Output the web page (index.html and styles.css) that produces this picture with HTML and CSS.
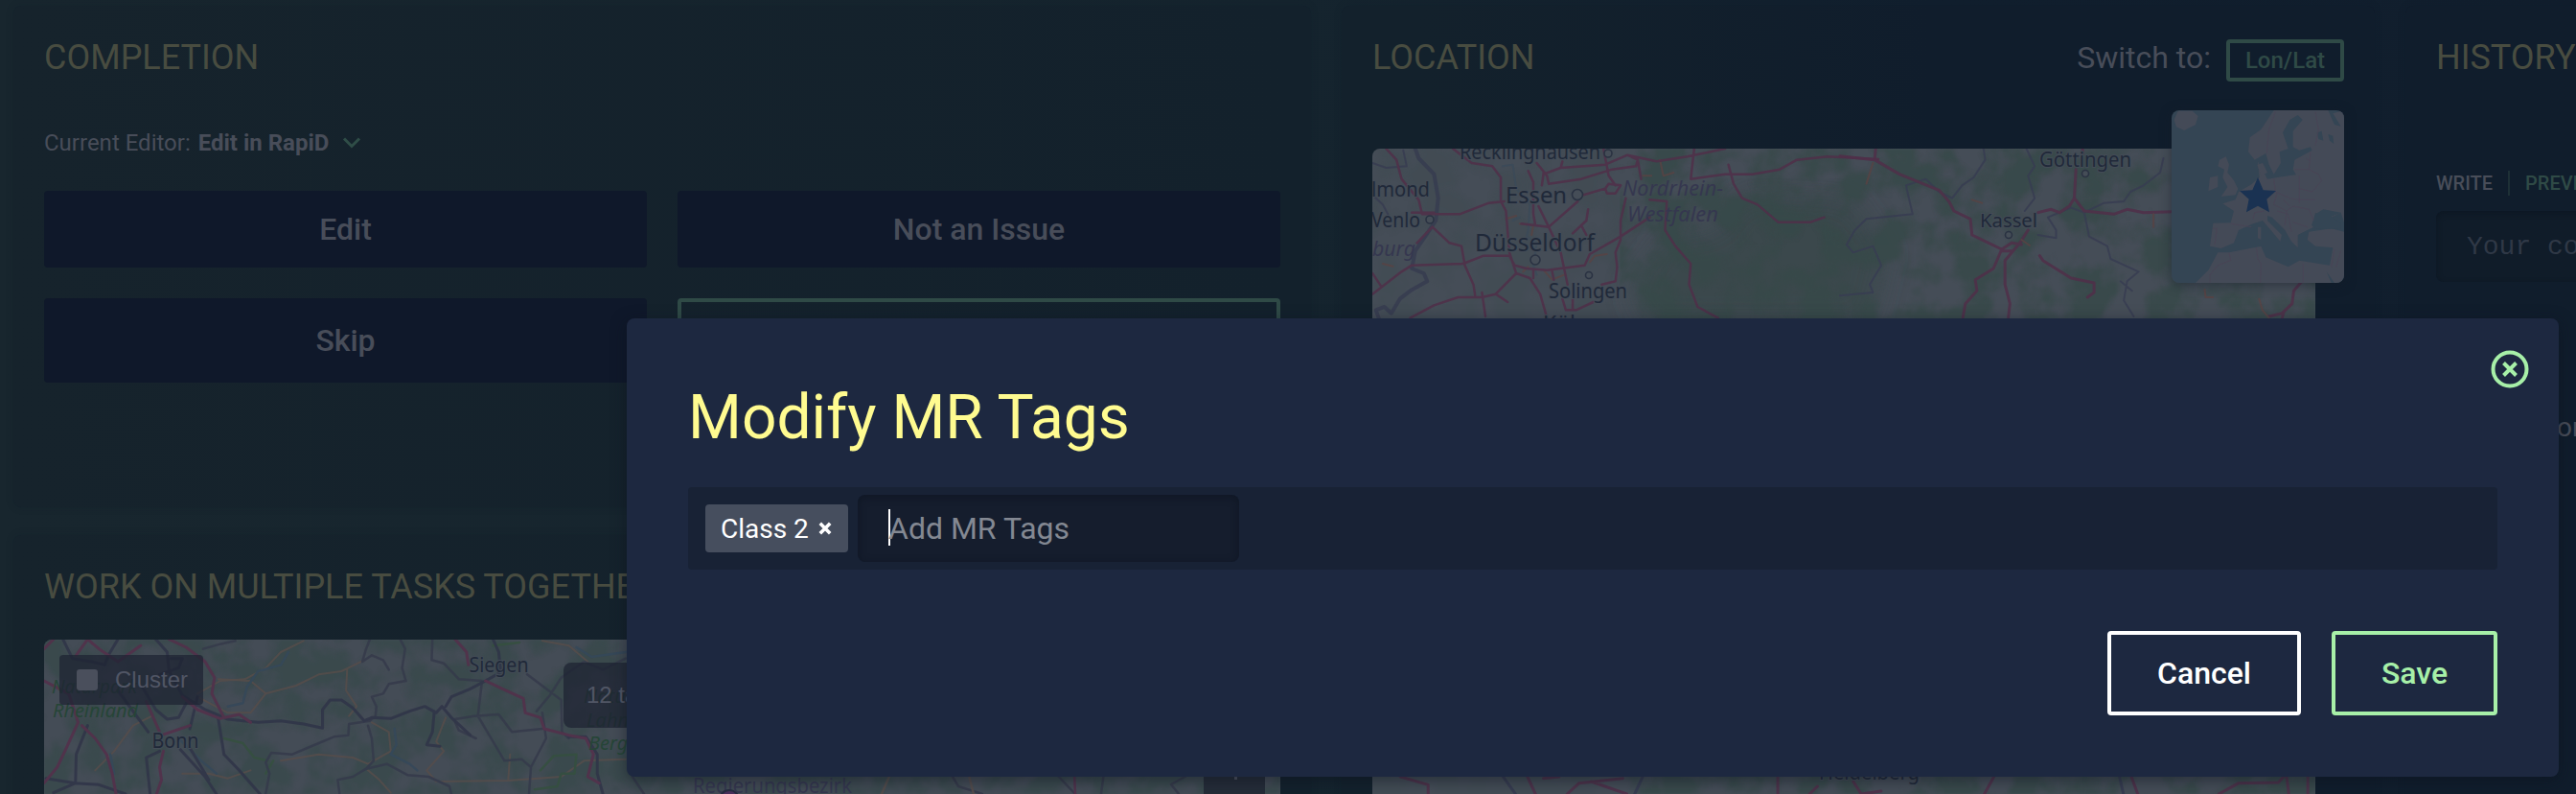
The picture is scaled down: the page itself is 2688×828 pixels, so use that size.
FILE: index.html
```html
<!DOCTYPE html>
<html lang="en">
<head>
<meta charset="utf-8">
<title>Modify MR Tags</title>
<link rel="stylesheet" href="styles.css">
</head>
<body>
<div class="page">
  <div class="column column-left">
    <section class="card card-completion">
      <h2 class="card-title">Completion</h2>
      <div class="editor-row">Current Editor: <strong>Edit in RapiD</strong>
        <svg class="chevron" width="20" height="12" viewBox="0 0 20 12"><path d="M2 1.5 10 9.5 18 1.5" fill="none" stroke="#2f4d47" stroke-width="3"/></svg>
      </div>
      <div class="actions">
        <div class="action">Edit</div>
        <div class="action">Not an Issue</div>
        <div class="action">Skip</div>
        <div class="action action-outline"></div>
      </div>
    </section>
    <section class="card card-tasks">
      <h2 class="card-title">Work on multiple tasks together</h2>
      <div class="task-map">
        <svg class="map-art" width="1290" height="161" viewBox="46 667 1290 161">
          <defs>
            <filter id="woods" x="0" y="0" width="100%" height="100%" color-interpolation-filters="sRGB">
              <feTurbulence type="fractalNoise" baseFrequency="0.028" numOctaves="5" seed="8"/>
              <feColorMatrix values="0 0 0 0 .215  0 0 0 0 .285  0 0 0 0 .29  0 0 0 4 -1.5"/>
              <feGaussianBlur stdDeviation="1"/>
            </filter>
          </defs>
          <rect x="46" y="667" width="1290" height="161" fill="#444c56"/>
          <rect x="46" y="667" width="1290" height="161" filter="url(#woods)" opacity=".75"/>
          <g class="lines" transform="translate(40 660) scale(.3954 .33333)">
            <g stroke="#564d4b" stroke-width="2">
              <path d="M700 25 L640 60 600 110 545 145 480 150 420 190 M475 145 L560 150 600 190 680 165 740 130 800 120 860 85 M600 190 L560 250 500 250 420 200 M815 115 L812 180 840 230 820 260 M150 430 L200 370 250 290 300 260 M380 440 L450 440 500 455 560 430 M640 400 L740 380 830 390 870 410 930 370 925 310 880 280 M870 430 L900 460 930 500 M1075 265 L1050 340 1070 370 1025 430 1050 465 1240 462 1245 380 M1240 462 L1380 450 1440 400 1550 395 M1450 90 L1400 40 1330 25"/>
            </g>
            <g stroke="#35485a" stroke-width="2.5"><path d="M660 60 L640 100 580 120 550 170 540 220 500 230 M940 300 L945 350 930 380 980 410 1000 430 M200 440 L190 380 M1420 45 L1460 75 1550 60 M370 330 L430 400 470 440"/></g>
            <g stroke="#35503f" stroke-width="2.5"><path d="M490 330 L540 345 570 390 605 400 M1325 430 L1360 385 1420 380 1415 440 1380 440 1370 480 1310 490 M620 400 L600 440 M1200 40 L1270 30"/></g>
            <g stroke="#353a4b" stroke-width="2.5">
              <path d="M880 70 L855 90 865 50 875 20 M880 70 L910 85 925 115 M955 20 L968 50 960 110 970 150 925 160 910 190 880 200 892 230 890 260 875 275 820 285 818 320 780 325 740 345 670 380 615 375 600 405 610 440 600 504 M1040 20 L1038 85 1070 95 1110 145 1170 150 M1290 130 L1380 210 1382 310 1400 330 M1550 80 L1490 115 1440 90 1380 140 1350 195 1315 245 M1170 160 L1160 260 1190 320 1230 400 1275 395 1300 420 1340 330 1330 250 M1100 270 L1150 260 1215 255 1250 310 1330 300 M1300 420 L1295 504 M865 425 L885 400 880 330 870 290 M865 425 L830 450 790 460 795 504 M865 425 L920 410 975 445 1030 450 1085 480 1090 504 M1100 280 L1110 305 1155 330 M435 50 L480 35 520 25"/>
            </g>
            <g stroke="#303448" stroke-width="3">
              <path d="M65 20 L90 80 140 90 175 100 185 70 210 20 M310 20 L340 60 345 120 380 195 440 240 500 270 580 280 640 275 700 285 750 298 750 240 770 210 800 210 830 235 860 275 880 265 930 268 980 245 1020 230 1050 250 1065 230 1090 265 1140 320 M1075 230 L1090 200 1140 175 1180 150 1225 120 M1045 245 L1040 310 1025 350 1060 355 M475 270 L490 380 530 430 585 504 M375 365 L440 450 470 504 M400 360 L450 460 M210 180 L290 310 M275 170 L310 240 340 270 370 265 390 220 M320 130 L370 110 380 80 350 80 M420 200 L400 300 M130 290 L100 380 98 470 160 475 230 504 M98 470 L20 455 M98 470 L40 500 M320 370 L285 390 295 504 M1400 325 L1445 325 1475 380 1475 440 1490 504 M1200 20 L1215 60 1220 120"/>
            </g>
            <g stroke="#542f4b" stroke-width="3">
              <path d="M15 50 L40 20 M100 70 L130 20 160 50 210 90 270 40 M345 20 L390 45 440 90 465 140 458 190 490 265 M15 150 L80 190 105 280 70 370 50 420 15 470 M115 290 L150 330 180 380 195 440 205 504 M285 215 L320 310 M325 320 L400 290 M330 370 L320 420 325 460 312 504 M380 200 L420 240 480 268 530 255 560 280 M1100 20 L1130 60 1135 100 M1180 150 L1225 175 1280 205 1285 250 1325 265 1335 300 1400 320 1445 330 1465 380 1450 450 1480 470"/>
            </g>
          </g>
          <g class="lines" stroke="#35394a" stroke-width="2.5">
            <path d="M994 810 L1000 820 1025 828 M1100 805 L1122 828 M1152 805 L1149 828 M1240 808 L1222 818 1230 828 M660 810 L672 828"/>
            <path d="M1121 805 L1122 828" stroke="#542f4b"/><path d="M930 805 L920 828 M1010 805 L1016 828" stroke="#564d4b"/>
          </g>
          <g class="place" font-size="22">
            <text x="489.500" y="701" textLength="62" lengthAdjust="spacingAndGlyphs">Siegen</text>
            <text x="158.500" y="780" textLength="49" lengthAdjust="spacingAndGlyphs">Bonn</text>
          </g>
          <g class="park" font-size="20">
            <text x="54" y="723" textLength="89" lengthAdjust="spacingAndGlyphs">Naturpark</text><text x="55" y="748" textLength="89" lengthAdjust="spacingAndGlyphs">Rheinland</text>
            <text x="609" y="733">Naturpark</text><text x="612" y="758">Lahn-</text><text x="614" y="782">Bergland</text>
          </g>
          <text class="region-upright" x="723" y="827" font-size="21" textLength="166" lengthAdjust="spacingAndGlyphs">Regierungsbezirk</text>
          <circle cx="761" cy="834" r="10" fill="#4a2f5c" stroke="#272c40" stroke-width="2"/>
        </svg>
        <div class="cluster"><span class="checkbox"></span>Cluster</div>
        <div class="task-count">12 tasks found</div>
        <div class="zoom-control"><span class="zoom-mark"></span></div>
      </div>
    </section>
  </div>

  <section class="card card-location">
    <header class="location-head">
      <h2 class="card-title">Location</h2>
      <div class="switch">Switch to:<span class="lonlat">Lon/Lat</span></div>
    </header>
    <div class="location-map">
      <svg class="map-art" width="984" height="673" viewBox="1432 155 984 673">
        <defs>
          <filter id="forest" x="0" y="0" width="100%" height="100%" color-interpolation-filters="sRGB">
            <feTurbulence type="fractalNoise" baseFrequency="0.025" numOctaves="5" seed="4"/>
            <feColorMatrix values="0 0 0 0 .215  0 0 0 0 .285  0 0 0 0 .285  0 0 0 4.5 -1.8"/>
            <feGaussianBlur stdDeviation="1"/>
          </filter>
          <filter id="soft"><feGaussianBlur stdDeviation="14"/></filter>
        </defs>
        <rect x="1432" y="155" width="984" height="673" fill="#454d57"/>
        <path d="M1740 245 L1790 240 1820 200 1930 205 1970 260 1950 340 1720 340 1700 300Z" fill="#38474a" filter="url(#soft)" opacity=".75"/>
        <rect x="1690" y="155" width="726" height="673" filter="url(#forest)" opacity=".85"/>
        <rect x="1432" y="155" width="258" height="673" filter="url(#forest)" opacity=".2"/>
        <g class="lines" transform="translate(1400 130) scale(.35714 .33333)">
          <g stroke="#584344" stroke-width="2"><path d="M480 295 L510 285 M520 310 L560 315 555 345 M725 430 L740 410 775 405 M590 455 L615 485 650 470 M880 160 L905 160 M930 110 L940 160 970 150 M120 435 L150 443 M530 460 L545 445"/></g>
          <g stroke="#3b4a59" stroke-width="2"><path d="M470 130 L500 125 510 200 550 250 545 330 540 350 570 370 560 440 570 470 M500 300 L520 290"/></g>
          <g stroke="#373c50" stroke-width="4"><path d="M215 75 L225 105 270 155 282 230 275 300 250 340 215 395 205 450 240 465 250 490 200 520 170 545 145 590 125 570 100 580 110 610"/></g>
          <g stroke="#383d52" stroke-width="2"><path d="M90 120 L130 135 190 130 180 80 M90 220 L120 250 135 280"/></g>
          <g stroke="#502f49" stroke-width="2.5">
            <path d="M130 75 L160 110 175 170 225 235 235 280 345 280 430 245 475 240 M205 275 L270 275 M325 75 L380 120 440 130 465 165 465 240 480 270 490 400 510 465 550 480 580 530 600 605 M545 145 L560 180 560 280 565 310 M570 120 L600 160 605 185 700 170 790 140 860 130 865 110 835 95 770 125 640 135 590 155 M585 190 L590 150 M640 135 L645 115 M835 95 L920 115 1010 100 1120 75 M865 110 L875 170 M765 75 L780 160 800 190 M690 225 L770 200 780 185 815 190 800 215 775 215 770 200 M525 310 L605 320 690 240 M575 255 L605 320 640 400 660 500 M720 265 L715 300 700 315 715 345 M700 315 L675 340 M1030 75 L1020 170 1120 155 1200 155 1280 140 1330 110 1420 100 1568 108 M1130 125 L1145 185 1170 230 1215 250 1275 305 1370 305 1410 290 M900 235 L950 240 945 330 975 380 1020 435 1015 500 1040 570 1100 605 M830 230 L815 300 815 360 800 400 805 445 800 490 760 500 M900 290 L815 350 725 405 710 440 600 455 540 450 505 440 490 410 415 410 355 435 205 440 175 460 90 530 M265 320 L315 370 350 380 360 440 385 500 390 535 M90 465 L115 505 M220 370 L265 320 M200 605 L270 565 340 540 410 540 450 530 510 465 M450 530 L485 555 M410 525 L420 600 M560 455 L560 480 M615 460 L620 485 M645 545 L655 580 685 580 735 555 M675 545 L675 580"/>
          </g>
        </g>
        <g class="lines" transform="translate(1920 130) scale(.34435 .33333)">
          <g stroke="#383d52" stroke-width="2"><path d="M435 75 L440 110 405 165 370 190 340 230 300 210 260 170 200 190 220 280 80 295 45 330 20 375 40 400 100 380 125 440 90 500 100 525 0 535 M565 75 L590 130 570 160 590 230 560 270 M980 105 L970 150 920 190 880 210 860 240 800 245 740 275 700 260 630 290 655 330 655 355 600 345 M740 275 L755 350 810 380 820 420 905 460 870 490 860 550 890 600 M850 490 L885 520"/></g>
          <g stroke="#502f49" stroke-width="3">
            <path d="M0 98 L105 110 180 155 300 205 330 240 345 270 395 295 400 345 490 390 465 450 410 485 415 520 380 560 372 605 M105 110 L108 75 M600 275 L640 265 665 275 695 255 710 230 715 140 M735 75 L735 90 M710 230 L740 270 830 280 870 265 920 275 1010 272 M570 330 L545 370 500 425 500 500 515 560 510 605 M490 390 L520 370 550 375 M490 395 L525 395 M605 410 L615 425 700 480 770 495 770 525 750 540 M1400 490 L1375 520 1370 560 1340 590 1300 600 M1345 585 L1340 605"/>
          </g>
          <g stroke="#584344" stroke-width="2"><path d="M100 120 L80 185 M550 360 L575 378 M1270 545 L1280 580 1300 605 M1105 515 L1108 540 1130 540 M950 280 L950 320 M400 235 L430 245"/></g>
        </g>
        <g class="lines" transform="translate(1200 780) scale(.8292 .33333)">
          <path d="M315 90 L350 115 350 144 M475 90 L485 144 M495 95 L515 90 M525 144 L540 110 595 95 M555 105 L600 144 M790 90 L790 144 M840 120 L830 144 M885 105 L895 144 920 135 M1062 90 L1050 144 M1235 90 L1243 144 M1345 144 L1370 110 1420 108 1430 80 1433 144 M1457 90 L1457 144" stroke="#502f49" stroke-width="3"/>
          <path d="M443 85 L460 144 M1220 90 L1225 144 M620 90 L610 144" stroke="#353a50" stroke-width="3"/>
        </g>
        <g class="place">
          <text x="1523" y="166" font-size="21" textLength="147" lengthAdjust="spacingAndGlyphs">Recklinghausen</text>
          <text x="1431" y="205" font-size="22" textLength="61" lengthAdjust="spacingAndGlyphs">lmond</text>
          <text x="1431" y="237" font-size="21" textLength="51" lengthAdjust="spacingAndGlyphs">Venlo</text>
          <text x="1571" y="212" font-size="24" textLength="64" lengthAdjust="spacingAndGlyphs">Essen</text>
          <text x="1539" y="262" font-size="25" textLength="125" lengthAdjust="spacingAndGlyphs">Düsseldorf</text>
          <text x="1616" y="311" font-size="21" textLength="82" lengthAdjust="spacingAndGlyphs">Solingen</text>
          <text x="1610" y="346" font-size="24" textLength="48" lengthAdjust="spacingAndGlyphs">Köln</text>
          <text x="2066" y="237" font-size="20" textLength="60" lengthAdjust="spacingAndGlyphs">Kassel</text>
          <text x="2128" y="174" font-size="21" textLength="96" lengthAdjust="spacingAndGlyphs">Göttingen</text>
          <text x="1898" y="813" font-size="21" textLength="105" lengthAdjust="spacingAndGlyphs">Heidelberg</text>
        </g>
        <g class="region">
          <text x="1432" y="267" font-size="22" textLength="45" lengthAdjust="spacingAndGlyphs">burg</text>
          <text x="1693" y="204" font-size="22" textLength="105" lengthAdjust="spacingAndGlyphs">Nordrhein-</text>
          <text x="1698" y="231" font-size="22" textLength="95" lengthAdjust="spacingAndGlyphs">Westfalen</text>
        </g>
        <g fill="#454d57" stroke="#2a3242" stroke-width="1.6">
          <circle cx="1646" cy="203" r="5.5"/><circle cx="1602" cy="271" r="5"/><circle cx="1492" cy="229" r="4"/><circle cx="1658" cy="287" r="3.5"/><circle cx="1678" cy="160" r="4"/><circle cx="2096" cy="245" r="3.5"/><circle cx="2176" cy="181" r="3.5"/>
        </g>
      </svg>
      <div class="overview">
        <svg width="180" height="180" viewBox="30 30 540 540">
          <rect x="30" y="30" width="540" height="540" fill="#344554"/>
          <g fill="#444a57">
            <path d="M38 60 L50 32 95 32 113 48 105 75 70 93 45 82Z"/>
            <path d="M350 30 L310 90 275 115 270 160 290 185 325 165 335 200 350 230 372 195 368 160 395 150 378 100 400 60 425 45 440 60 410 95 410 145 430 155 465 145 470 155 415 185 410 215 420 232 375 238 330 245 300 190 305 240 280 262 240 285 230 310 190 322 225 345 215 382 160 383 150 455 185 462 225 445 240 405 285 385 315 375 345 410 370 440 375 420 330 375 330 360 345 365 385 405 405 440 425 460 425 420 455 405 475 395 480 350 510 375 560 350 570 380 570 30 535 40 560 80 540 75 520 30Z"/>
            <path d="M460 410 L530 400 570 410 570 570 105 570 145 530 175 475 210 475 310 455 325 490 395 520 430 500 525 515 535 460 480 455 455 435Z"/>
            <path d="M180 185 L200 175 210 200 205 225 225 250 238 275 230 295 185 300 205 270 190 240 195 215 175 205Z"/><path d="M150 240 L175 235 175 270 145 283Z"/><path d="M300 395 L310 395 310 435 300 430Z"/>
            <path d="M298 200 L315 195 330 225 310 235Z"/>
          </g>
          <g fill="#344554"><path d="M480 355 L505 340 560 350 530 362 560 385 560 402 480 400 468 390Z"/><path d="M485 100 L500 95 505 125 490 120Z M520 105 L535 110 538 135 525 125Z M515 535 L540 570 530 570Z"/></g>
          <g fill="none" stroke="#494355" stroke-width="2.5"><path d="M355 35 L335 90 328 165 M480 35 L490 90 480 140 M465 160 L460 215 490 230 500 250 470 285 430 275 430 320 M350 245 L355 285 400 305 430 310 480 310 M415 215 L460 215 M430 235 L430 275 M360 290 L350 325 390 345 410 330 460 340 475 375 M360 345 L395 355 405 410 M390 345 L385 390 M410 380 L455 395 M400 330 L380 310 M160 400 L172 400 165 450 M215 385 L280 395 M285 370 L290 350 320 345 M210 475 L215 500 175 515 150 545 150 570 M295 460 L300 495 310 510 308 570 M442 510 L442 570 M540 465 L530 520 M560 470 L545 520 M450 180 L465 190"/></g>
          <path d="M300 240 L317 280 357 282 328 308 336 349 300 329 264 349 272 308 243 282 283 280Z" fill="#1a3252"/>
        </svg>
      </div>
    </div>
  </section>

  <section class="card card-history">
    <h2 class="card-title">History</h2>
    <div class="tabs"><span>Write</span><i class="tab-rule"></i><span class="tab-preview">Preview</span></div>
    <div class="comment">Your comment</div>
    <div class="history-sort">or</div>
  </section>
</div>

<div class="modal">
  <svg class="close" width="40" height="40" viewBox="0 0 40 40"><circle cx="20" cy="20" r="17.5" fill="none" stroke="#a7f0a8" stroke-width="4"/><path d="M13.500 13.500 26.500 26.500M26.500 13.500 13.500 26.500" stroke="#a7f0a8" stroke-width="4"/></svg>
  <h1 class="modal-title">Modify MR Tags</h1>
  <div class="tag-box">
    <span class="tag">Class 2<svg width="14" height="14" viewBox="0 0 14 14"><path d="M1.8 1.8 12.2 12.2M12.2 1.8 1.8 12.2" stroke="#fff" stroke-width="3.6"/></svg></span>
    <div class="tag-input"><i class="caret"></i>Add MR Tags</div>
  </div>
  <div class="modal-buttons">
    <div class="button button-cancel">Cancel</div>
    <div class="button button-save">Save</div>
  </div>
</div>
</body>
</html>
```

FILE: styles.css
```css
* { box-sizing: border-box; }
body {
  margin: 0;
  width: 2688px;
  height: 828px;
  position: relative;
  overflow: hidden;
  font-family: Roboto, "Liberation Sans", sans-serif;
  color: #484d59;
  background: linear-gradient(90deg, #18262e 0%, #15242e 50%, #111f2e 75%, #111e2d 100%);
}
h1, h2 { margin: 0; font-weight: 400; }
.page {
  display: flex;
  gap: 32px;
  width: 2688px;
  height: 828px;
  padding: 6px 0 0 14px;
  overflow: hidden;
}
.column-left {
  width: 1354px;
  flex: none;
  display: flex;
  flex-direction: column;
  gap: 29px;
}
.card {
  flex: none;
  padding: 32px;
  border-radius: 8px;
  background: rgba(15, 24, 38, .2);
  box-shadow: 0 0 8px rgba(15, 24, 38, .15);
}
.card-title {
  font-size: 36px;
  line-height: 44px;
  text-transform: uppercase;
  white-space: nowrap;
  color: #484c40;
}
.card-completion { height: 523px; }
.editor-row {
  display: flex;
  align-items: center;
  margin-top: 49px;
  height: 36px;
  font-size: 24px;
}
.editor-row strong { margin-left: 8px; font-weight: 700; }
.chevron { margin-left: 14px; }
.actions {
  display: grid;
  grid-template-columns: 1fr 1fr;
  grid-template-rows: 80px 88px;
  gap: 32px;
  margin-top: 32px;
}
.action {
  display: flex;
  align-items: center;
  justify-content: center;
  border-radius: 4px;
  background: #0f182a;
  font-size: 32px;
  font-weight: 500;
}
.action-outline { background: none; border: 4px solid #2f4a46; }
.card-tasks { height: 300px; }
.task-map {
  position: relative;
  margin-top: 33px;
  height: 161px;
  border-radius: 8px 8px 0 0;
  overflow: hidden;
}
.map-art { display: block; font-family: "Noto Sans", sans-serif; }
.lines { fill: none; stroke-linejoin: round; stroke-linecap: round; opacity: .85; }
.lines path { vector-effect: non-scaling-stroke; }
.place { fill: #202939; stroke: #434b56; stroke-width: 2px; paint-order: stroke; }
.region { fill: #35374f; font-style: italic; }
.region-upright { fill: #35374f; }
.park { fill: #264537; font-style: italic; }
.cluster, .task-count {
  position: absolute;
  display: flex;
  align-items: center;
  font-family: "Liberation Sans", Arial, sans-serif;
  font-size: 24px;
  white-space: nowrap;
  color: #515665;
  background: rgba(29, 35, 50, .72);
}
.cluster { left: 16px; top: 16px; width: 150px; height: 52px; padding-left: 18px; border-radius: 4px; }
.checkbox { width: 22px; height: 22px; margin-right: 18px; border-radius: 3px; background: #4a4f5c; }
.task-count { left: 542px; top: 24px; width: 220px; height: 68px; padding-left: 24px; border-radius: 8px; }
.zoom-control {
  position: absolute;
  left: 1210px;
  top: 120px;
  width: 64px;
  height: 60px;
  padding-top: 10px;
  background: #252c38;
}
.zoom-mark { display: block; width: 3px; height: 16px; margin-left: 32px; background: #4d5260; }
.card-location { width: 1078px; height: 860px; }
.location-head { display: flex; justify-content: space-between; height: 47px; }
.switch { display: flex; font-size: 32px; line-height: 44px; }
.lonlat {
  width: 123px;
  height: 44px;
  margin: 3px 0 0 16px;
  border: 4px solid #2f4a46;
  border-radius: 4px;
  font-size: 24px;
  font-weight: 500;
  line-height: 36px;
  text-align: center;
  color: #2f4a46;
}
.location-map { position: relative; margin-top: 70px; width: 984px; }
.location-map .map-art { border-radius: 8px 0 0 0; }
.overview {
  position: absolute;
  left: 834px;
  top: -40px;
  width: 180px;
  height: 180px;
  border-radius: 8px;
  overflow: hidden;
  box-shadow: 0 2px 12px rgba(20, 28, 40, .5);
}
.overview svg { display: block; }
.card-history { width: 340px; height: 860px; }
.tabs {
  display: flex;
  align-items: center;
  margin-top: 96px;
  height: 26px;
  font-size: 20px;
  font-weight: 500;
  text-transform: uppercase;
}
.tab-rule { width: 2px; height: 26px; margin: 0 16px; background: #1e3036; }
.tab-preview { color: #2f4a46; }
.comment {
  margin-top: 16px;
  height: 74px;
  padding-left: 32px;
  border-radius: 8px;
  background: #101c29;
  box-shadow: inset 0 2px 6px rgba(8, 16, 26, .4);
  font-family: "Liberation Mono", monospace;
  font-size: 28px;
  line-height: 76px;
  white-space: nowrap;
  color: #2f3846;
}
.history-sort { margin: 134px 0 0 126px; font-size: 28px; line-height: 36px; }
.modal {
  position: absolute;
  left: 654px;
  top: 332px;
  width: 2016px;
  height: 478px;
  padding: 64px;
  border-radius: 8px;
  background: #1d2840;
  box-shadow: 0 4px 16px rgba(12, 18, 30, .5);
}
.close { position: absolute; right: 31px; top: 33px; }
.modal-title { font-size: 64px; line-height: 80px; color: #fffb90; }
.tag-box {
  display: flex;
  align-items: center;
  gap: 10px;
  margin-top: 32px;
  height: 86px;
  padding-left: 18px;
  border-radius: 4px;
  background: #182235;
}
.tag {
  display: flex;
  align-items: center;
  justify-content: space-between;
  width: 149px;
  height: 50px;
  padding: 0 17px 0 16px;
  border-radius: 4px;
  background: #464e5e;
  color: #fff;
  font-size: 28px;
}
.tag-input {
  display: flex;
  align-items: center;
  width: 398px;
  height: 70px;
  padding-left: 32px;
  border-radius: 8px;
  background: #151d2d;
  box-shadow: inset 0 2px 8px rgba(10, 16, 28, .5);
  font-size: 32px;
  color: #838892;
}
.caret { width: 2px; height: 38px; margin-right: -2px; margin-top: -2px; background: #fff; }
.modal-buttons { display: flex; justify-content: flex-end; gap: 32px; margin-top: 64px; }
.button {
  display: flex;
  align-items: center;
  justify-content: center;
  height: 88px;
  border: 4px solid;
  border-radius: 4px;
  font-size: 32px;
  font-weight: 500;
}
.button-cancel { width: 202px; color: #fff; }
.button-save { width: 173px; color: #a7f0a8; }
```
